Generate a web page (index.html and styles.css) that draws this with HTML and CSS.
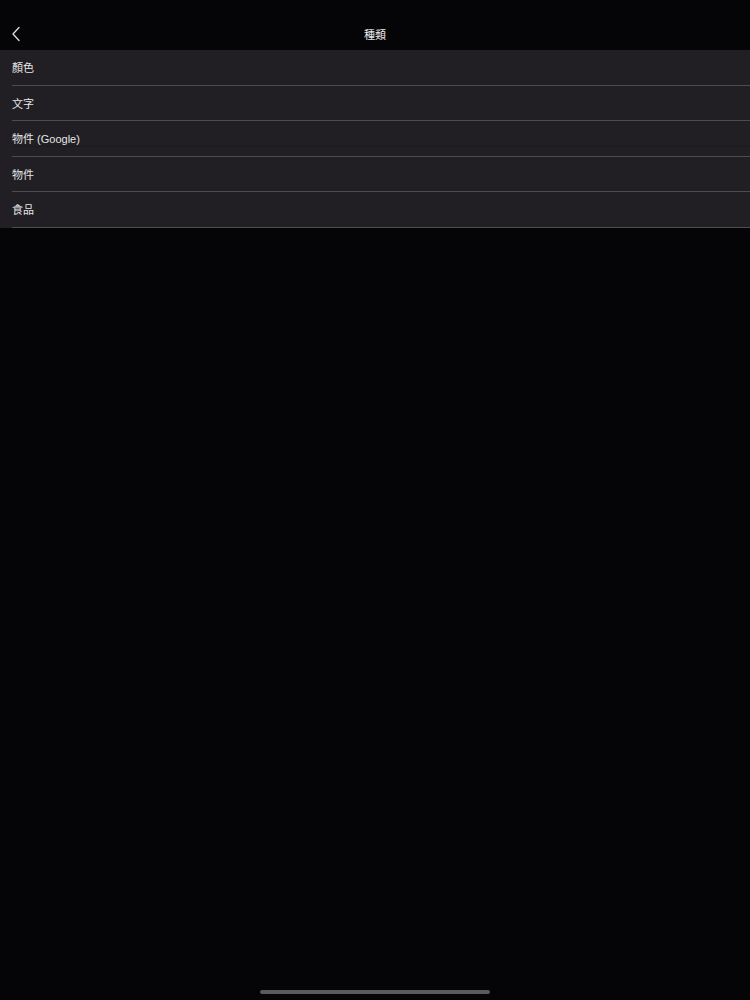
FILE: index.html
```html
<!DOCTYPE html>
<html lang="zh-Hant">
<head>
<meta charset="utf-8">
<link rel="stylesheet" href="styles.css">
</head>
<body>
<div class="screen">
  <header class="nav">
    <span class="back">
      <svg width="10" height="16" viewBox="0 0 10 16"><path d="M8 1.5 L2 8 L8 14.5" fill="none" stroke="#d8d8da" stroke-width="1.4" stroke-linecap="round" stroke-linejoin="round"/></svg>
    </span>
    <h1 class="title">種類</h1>
  </header>
  <ul class="list">
    <li class="row"><span>顏色</span></li>
    <li class="row"><span>文字</span></li>
    <li class="row row-faint"><span>物件 (Google)</span></li>
    <li class="row"><span>物件</span></li>
    <li class="row"><span>食品</span></li>
  </ul>
  <div class="home"></div>
</div>
</body>
</html>
```

FILE: styles.css
```css
html, body {
  margin: 0;
  padding: 0;
  background: #050407;
}
.screen {
  width: 750px;
  height: 1000px;
  position: relative;
  background: #050407;
  font-family: "Liberation Sans", "Noto Sans CJK TC", sans-serif;
  color: #e6e6e8;
}
.nav {
  height: 50px;
  display: flex;
  align-items: center;
  justify-content: center;
  position: relative;
}
.back {
  position: absolute;
  left: 11px;
  top: 26px;
  display: flex;
}
.title {
  margin: 0;
  font-size: 11px;
  font-weight: 400;
  margin-top: 17px;
  color: #ececee;
}
.list {
  list-style: none;
  margin: 0;
  padding: 0;
  background: #211f23;
}
.row {
  margin-left: 12px;
  height: 34.5px;
  border-bottom: 1px solid #4d4c51;
  display: flex;
  align-items: center;
  font-size: 11px;
  position: relative;
}
.row-faint::after {
  content: "";
  position: absolute;
  left: 0;
  right: 0;
  top: 25px;
  height: 1px;
  background: #1b1a1d;
}
.home {
  position: absolute;
  left: 260px;
  top: 990px;
  width: 230px;
  height: 4px;
  border-radius: 2px;
  background: #5b5a5e;
}
```
